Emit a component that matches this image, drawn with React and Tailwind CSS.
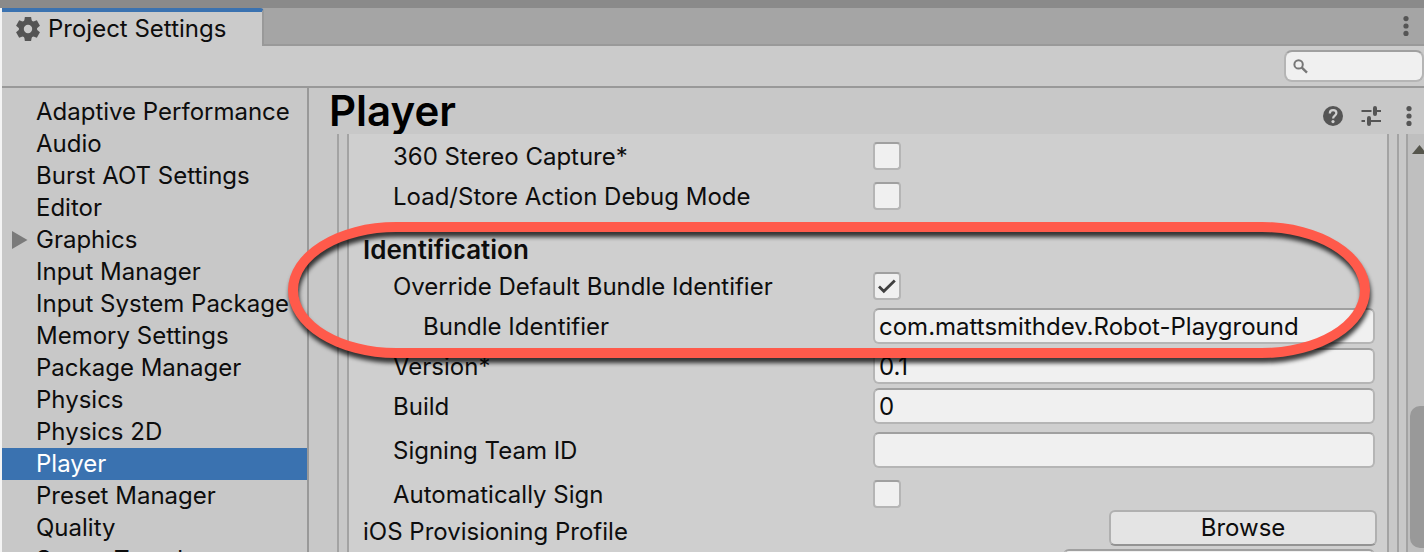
import React from "react";

const sections = [
  "Adaptive Performance", "Audio", "Burst AOT Settings", "Editor", "Graphics",
  "Input Manager", "Input System Package", "Memory Settings", "Package Manager",
  "Physics", "Physics 2D", "Player", "Preset Manager", "Quality", "Scene Template",
];

const field =
  "border-2 border-[#b5b5b5] border-t-[#a0a0a0] bg-[#f0f0f0] text-[#0d0d0d] outline-none";

function Gear() {
  return (
    <svg className="size-6 shrink-0" viewBox="0 0 24 24" fill="none" stroke="#555">
      <circle cx="12" cy="12" r="6.7" strokeWidth="5" />
      <g fill="#555" stroke="none">
        {[0, 60, 120, 180, 240, 300].map((a) => (
          <path key={a} d="M8.9 0h6.2l.9 5h-8z" transform={`rotate(${a} 12 12)`} />
        ))}
      </g>
    </svg>
  );
}

function Dots() {
  return (
    <svg className="h-5 w-1.5" viewBox="0 0 6 20" fill="#555">
      <circle cx="3" cy="2.6" r="2.6" />
      <circle cx="3" cy="10" r="2.6" />
      <circle cx="3" cy="17.4" r="2.6" />
    </svg>
  );
}

function Row({ id, label, indent = "pl-11", className = "h-10", children }) {
  return (
    <div className={`flex shrink-0 items-center ${className}`}>
      <label htmlFor={id} className={`w-[524px] shrink-0 pt-0.5 whitespace-nowrap ${indent}`}>
        {label}
      </label>
      {children}
    </div>
  );
}

function Check({ id, defaultChecked }) {
  return (
    <span className="relative flex size-7 shrink-0">
      <input
        id={id}
        type="checkbox"
        defaultChecked={defaultChecked}
        className={`peer size-7 appearance-none rounded-[4px] ${field}`}
      />
      <svg
        className="pointer-events-none absolute inset-0 hidden size-7 peer-checked:block"
        viewBox="0 0 28 28"
        fill="none"
        stroke="#404040"
        strokeWidth="2.8"
      >
        <path d="M6 14.6l4.8 4.6L21.8 8.4" />
      </svg>
    </span>
  );
}

function Text({ id, defaultValue }) {
  return (
    <input
      id={id}
      type="text"
      defaultValue={defaultValue}
      className={`h-9 min-w-0 grow rounded-[6px] px-1 ${field}`}
    />
  );
}

export default function App() {
  return (
    <div className="relative flex h-screen flex-col overflow-hidden bg-[#c8c8c8] font-['Inter',sans-serif] text-[24px] leading-8 text-[#0d0d0d]">
      <div className="h-2 shrink-0 bg-[#8a8a8a]" />
      <div className="flex min-h-0 grow flex-col border-l-2 border-[#f4f4f4]">
        <header className="flex h-[38px] shrink-0 bg-[#a5a5a5]">
          <div className="flex w-[262px] items-center gap-2 rounded-tr-[4px] border-t-4 border-r-2 border-t-[#3a72b0] border-r-[#999] bg-[#cbcbcb] pl-3.5">
            <Gear />
            <h2 className="whitespace-nowrap">Project Settings</h2>
          </div>
          <div className="flex grow items-center justify-end border-b-2 border-[#999] pr-[15px]">
            <button type="button" aria-label="Window menu"><Dots /></button>
          </div>
        </header>
        <div className="flex h-[42px] shrink-0 items-center justify-end border-b-2 border-[#999] bg-[#cbcbcb]">
          <label className={`flex h-8 w-[140px] items-center rounded-[8px] pl-[7px] ${field}`}>
            <svg className="size-4 shrink-0" viewBox="0 0 16 16" fill="none" stroke="#777" strokeWidth="2">
              <circle cx="5.6" cy="6.4" r="4.2" />
              <path d="M8.6 9.4l5.4 5.2" strokeWidth="2.4" />
            </svg>
            <input type="search" aria-label="Search settings" className="min-w-0 grow bg-transparent outline-none" />
          </label>
        </div>
        <div className="flex min-h-0 grow">
          <nav className="w-[307px] shrink-0 overflow-hidden border-r-2 border-[#999] pt-2">
            {sections.map((s) => (
              <a
                key={s}
                href="#"
                className={`flex h-8 items-center pl-2.5 whitespace-nowrap ${s === "Player" ? "bg-[#3a72b0] text-white" : ""}`}
              >
                <span className="w-6 shrink-0">
                  {s === "Graphics" && (
                    <svg className="h-[18px] w-4" viewBox="0 0 16 18" fill="#7b7b7b">
                      <path d="M0 0l15.500 9L0 18z" />
                    </svg>
                  )}
                </span>
                {s}
              </a>
            ))}
          </nav>
          <main className="flex min-w-0 grow flex-col">
            <div className="flex h-[46px] shrink-0 items-center pr-3 pl-5">
              <h1 className="grow text-[42px] font-semibold text-black">Player</h1>
              <div className="flex items-center gap-[18px] pt-2.5">
                <button type="button" aria-label="Help">
                  <svg className="size-5" viewBox="0 0 20 20" fill="none">
                    <circle cx="10" cy="10" r="10" fill="#555" />
                    <path d="M6.8 7.4c0-2 1.400-3.300 3.300-3.300s3.300 1.200 3.300 3c0 2.500-3.300 2.600-3.300 5.400" stroke="#d0d0d0" strokeWidth="2.200" />
                    <circle cx="10" cy="15.600" r="1.600" fill="#d0d0d0" />
                  </svg>
                </button>
                <button type="button" aria-label="Presets">
                  <svg className="size-5" viewBox="0 0 20 20" fill="none" stroke="#555">
                    <path d="M.5 5h10M15 5h5M.5 15h3.500M9 15h11" strokeWidth="2" />
                    <path d="M14 2v6M8 12v6" strokeWidth="4" strokeLinecap="round" />
                  </svg>
                </button>
                <button type="button" aria-label="Player menu" className="pl-[7px]"><Dots /></button>
              </div>
            </div>
            <div className="flex min-h-0 grow pl-7">
              <div className="flex min-w-0 grow border-x-2 border-[#a3a3a3] px-2">
                <div className="flex min-w-0 grow flex-col overflow-hidden border-x-2 border-[#a3a3a3] bg-[#cfcfcf] pt-0.5 pr-3">
                  <Row id="stereo" label="360 Stereo Capture*"><Check id="stereo" /></Row>
                  <Row id="debug" label="Load/Store Action Debug Mode"><Check id="debug" /></Row>
                  <h3 className="h-[50px] shrink-0 pt-[18px] pl-3.5 text-[26px] font-semibold">Identification</h3>
                  <Row id="override" label="Override Default Bundle Identifier"><Check id="override" defaultChecked /></Row>
                  <Row id="bundle" label="Bundle Identifier" indent="pl-[74px]">
                    <Text id="bundle" defaultValue="com.mattsmithdev.Robot-Playground" />
                  </Row>
                  <Row id="version" label="Version*"><Text id="version" defaultValue="0.1" /></Row>
                  <Row id="build" label="Build"><Text id="build" defaultValue="0" /></Row>
                  <Row id="team" label="Signing Team ID" className="h-12"><Text id="team" /></Row>
                  <Row id="sign" label="Automatically Sign" className="h-10"><Check id="sign" /></Row>
                  <div className="-mt-1 -mr-0.5 flex h-9 shrink-0 items-end justify-between pl-3.5">
                    <span className="leading-7 whitespace-nowrap">iOS Provisioning Profile</span>
                    <button type="button" className="h-9 w-[268px] rounded-[6px] border-2 border-[#b0b0b0] border-b-[#939393] bg-[#e4e4e4]">
                      Browse
                    </button>
                  </div>
                  <div className="mt-[3px] flex shrink-0 justify-end">
                    <input type="text" aria-label="Profile ID" className={`h-9 w-[312px] rounded-[6px] ${field}`} />
                  </div>
                </div>
              </div>
              <div className="ml-[7px] flex w-[18px] shrink-0 flex-col items-end overflow-hidden border-l-2 border-[#a3a3a3] bg-[#bfbfbf]">
                <svg className="mt-[11px] h-[9px] w-3 shrink-0" viewBox="0 0 12 9" fill="#55554c">
                  <path d="M0 9L7.500 0L15 9z" />
                </svg>
                <div className="mt-[252px] h-[142px] w-3.5 shrink-0 rounded-l-[10px] bg-[#999]" />
              </div>
            </div>
          </main>
        </div>
      </div>
      <div className="pointer-events-none absolute top-[222px] right-[54px] left-[288px] h-[136px] rounded-[108px/68px] border-10 border-[#ff5a4b] drop-shadow-[1px_5px_2px_rgba(0,0,0,0.75)]" />
    </div>
  );
}
